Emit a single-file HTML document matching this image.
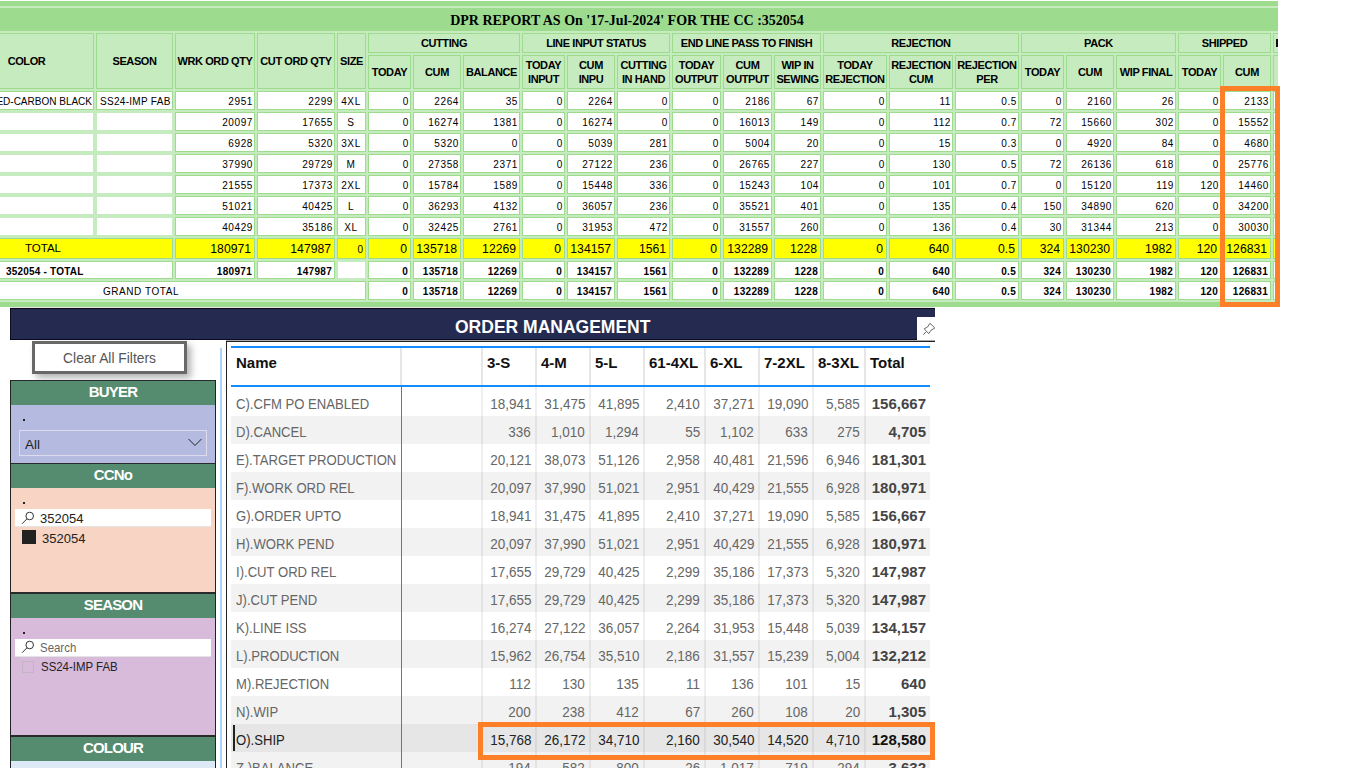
<!DOCTYPE html>
<html><head><meta charset="utf-8"><title>DPR</title><style>
html,body{margin:0;padding:0;background:#fff;}
body{width:1366px;height:768px;overflow:hidden;position:relative;font-family:"Liberation Sans",sans-serif;}
#dpr{position:absolute;left:0;top:0;width:1278px;height:307px;overflow:hidden;background:#c6ebbe;}
.band{position:absolute;left:0;width:1278px;height:5px;background:#9ddc8f;}
#dpr .c{position:absolute;box-sizing:border-box;border:1px solid #9ddc8f;overflow:hidden;}
.title{position:absolute;left:0;top:9px;width:1254px;height:23px;line-height:23px;text-align:center;
  font-family:"Liberation Serif",serif;font-weight:bold;font-size:14px;color:#000;}
.h{display:flex;align-items:center;justify-content:center;text-align:center;font-weight:bold;font-size:11px;letter-spacing:-0.4px;line-height:14px;color:#000;}
.d,.b,.y,.g{font-size:10px;color:#000;line-height:17px;}
.d .rt,.d .ct{letter-spacing:0.6px;right:1px}
.d .lt{letter-spacing:0.3px;}
.b .rt{letter-spacing:0.3px;right:2px}
.b{font-weight:bold;}
.y{font-size:12.2px;line-height:19px;}
.y .rt{right:3px}
.rt{position:absolute;right:2px;top:1px;white-space:nowrap;}
.lt{position:absolute;left:3px;top:1px;white-space:nowrap;}
.ct{position:absolute;left:0;right:0;text-align:center;top:1px;white-space:nowrap;}
.ob{position:absolute;box-sizing:border-box;border:5px solid #fd7f27;}
#navy{position:absolute;left:10px;top:308px;width:925px;height:32px;background:#252b50;box-sizing:border-box;border-top:1px solid #0b0b1c;border-bottom:1px solid #0b0b1c;border-left:1px solid #0b0b1c;}
.otitle{position:absolute;left:444px;top:8px;font-weight:bold;font-size:17.5px;color:#fff;line-height:20px;}
#pin{position:absolute;left:917px;top:317px;width:18px;height:23px;background:#fff;overflow:hidden;}
#clear{position:absolute;left:32px;top:341px;width:155px;height:33px;box-sizing:border-box;border:3px solid #686868;background:#fff;
  text-align:center;line-height:30px;font-size:13.8px;color:#555;box-shadow:4px 4px 7px rgba(0,0,0,0.3);}
.slh{position:absolute;left:11px;width:204px;background:#558b6e;color:#fff;font-weight:bold;font-size:15px;letter-spacing:-0.8px;text-align:center;text-indent:0;}
.dot{position:absolute;width:2px;height:2px;background:#222;}
.sbox{position:absolute;left:15px;width:196px;height:18px;background:#fff;border-bottom:1px solid #e4e4e4;box-sizing:border-box;}
.mag{position:absolute;}
.st{position:absolute;font-size:13px;line-height:16px;white-space:nowrap;}
.th{position:absolute;font-weight:bold;font-size:15px;color:#111;line-height:18px;white-space:nowrap;}
.td{position:absolute;font-size:15.5px;line-height:16px;white-space:nowrap;}
.nm{transform:scaleX(0.845);transform-origin:0 0;}
.tn{transform:scaleX(0.87);transform-origin:100% 0;}
.tb{font-weight:bold;font-size:15px;}
</style></head>
<body>
<div id="dpr">
<div style="position:absolute;left:0;top:0;width:1278px;height:1px;background:#fff"></div>
<div class="band" style="top:1px"></div>
<div class="band" style="top:302px"></div>
<div style="position:absolute;left:0;top:8px;width:1278px;height:23px;background:#9ddc8f"></div>
<div class="title">DPR REPORT AS On '17-Jul-2024' FOR THE CC :352054</div>
<div class="c h" style="left:-41px;top:33px;width:135px;height:56px;background:#c6ebbe;border-color:#9ddc8f;"><span>COLOR</span></div>
<div class="c h" style="left:96px;top:33px;width:77px;height:56px;background:#c6ebbe;border-color:#9ddc8f;"><span>SEASON</span></div>
<div class="c h" style="left:175px;top:33px;width:80px;height:56px;background:#c6ebbe;border-color:#9ddc8f;"><span>WRK ORD QTY</span></div>
<div class="c h" style="left:257px;top:33px;width:78px;height:56px;background:#c6ebbe;border-color:#9ddc8f;"><span>CUT ORD QTY</span></div>
<div class="c h" style="left:337px;top:33px;width:29px;height:56px;background:#c6ebbe;border-color:#9ddc8f;"><span>SIZE</span></div>
<div class="c h" style="left:368px;top:33px;width:152px;height:20px;background:#c6ebbe;border-color:#9ddc8f;"><span>CUTTING</span></div>
<div class="c h" style="left:522px;top:33px;width:148px;height:20px;background:#c6ebbe;border-color:#9ddc8f;"><span>LINE INPUT STATUS</span></div>
<div class="c h" style="left:672px;top:33px;width:149px;height:20px;background:#c6ebbe;border-color:#9ddc8f;"><span>END LINE PASS TO FINISH</span></div>
<div class="c h" style="left:823px;top:33px;width:196px;height:20px;background:#c6ebbe;border-color:#9ddc8f;"><span>REJECTION</span></div>
<div class="c h" style="left:1021px;top:33px;width:155px;height:20px;background:#c6ebbe;border-color:#9ddc8f;"><span>PACK</span></div>
<div class="c h" style="left:1178px;top:33px;width:93px;height:20px;background:#c6ebbe;border-color:#9ddc8f;"><span>SHIPPED</span></div>
<div class="c h" style="left:1273px;top:33px;width:58px;height:20px;background:#c6ebbe;border-color:#9ddc8f;"></div>
<div class="c h" style="left:368px;top:55px;width:43px;height:34px;background:#c6ebbe;border-color:#9ddc8f;"><span>TODAY</span></div>
<div class="c h" style="left:413px;top:55px;width:48px;height:34px;background:#c6ebbe;border-color:#9ddc8f;"><span>CUM</span></div>
<div class="c h" style="left:463px;top:55px;width:57px;height:34px;background:#c6ebbe;border-color:#9ddc8f;"><span>BALANCE</span></div>
<div class="c h" style="left:522px;top:55px;width:43px;height:34px;background:#c6ebbe;border-color:#9ddc8f;"><span>TODAY<br>INPUT</span></div>
<div class="c h" style="left:567px;top:55px;width:48px;height:34px;background:#c6ebbe;border-color:#9ddc8f;"><span>CUM<br>INPU</span></div>
<div class="c h" style="left:617px;top:55px;width:53px;height:34px;background:#c6ebbe;border-color:#9ddc8f;"><span>CUTTING<br>IN HAND</span></div>
<div class="c h" style="left:672px;top:55px;width:49px;height:34px;background:#c6ebbe;border-color:#9ddc8f;"><span>TODAY<br>OUTPUT</span></div>
<div class="c h" style="left:723px;top:55px;width:49px;height:34px;background:#c6ebbe;border-color:#9ddc8f;"><span>CUM<br>OUTPUT</span></div>
<div class="c h" style="left:774px;top:55px;width:47px;height:34px;background:#c6ebbe;border-color:#9ddc8f;"><span>WIP IN<br>SEWING</span></div>
<div class="c h" style="left:823px;top:55px;width:64px;height:34px;background:#c6ebbe;border-color:#9ddc8f;"><span>TODAY<br>REJECTION</span></div>
<div class="c h" style="left:889px;top:55px;width:64px;height:34px;background:#c6ebbe;border-color:#9ddc8f;"><span>REJECTION<br>CUM</span></div>
<div class="c h" style="left:955px;top:55px;width:64px;height:34px;background:#c6ebbe;border-color:#9ddc8f;"><span>REJECTION<br>PER</span></div>
<div class="c h" style="left:1021px;top:55px;width:43px;height:34px;background:#c6ebbe;border-color:#9ddc8f;"><span>TODAY</span></div>
<div class="c h" style="left:1066px;top:55px;width:48px;height:34px;background:#c6ebbe;border-color:#9ddc8f;"><span>CUM</span></div>
<div class="c h" style="left:1116px;top:55px;width:60px;height:34px;background:#c6ebbe;border-color:#9ddc8f;"><span>WIP FINAL</span></div>
<div class="c h" style="left:1178px;top:55px;width:43px;height:34px;background:#c6ebbe;border-color:#9ddc8f;"><span>TODAY</span></div>
<div class="c h" style="left:1223px;top:55px;width:48px;height:34px;background:#c6ebbe;border-color:#9ddc8f;"><span>CUM</span></div>
<div class="c h" style="left:1273px;top:55px;width:58px;height:34px;background:#c6ebbe;border-color:#9ddc8f;"><span></span></div>
<div class="c d" style="left:-41px;top:91px;width:135px;height:19px;background:#fff;border-color:#9ddc8f;"><span class="rt" style="letter-spacing:0">ED-CARBON BLACK</span></div>
<div class="c d" style="left:96px;top:91px;width:77px;height:19px;background:#fff;border-color:#9ddc8f;"><span class="lt">SS24-IMP FAB</span></div>
<div class="c d" style="left:175px;top:91px;width:80px;height:19px;background:#fff;border-color:#9ddc8f;"><span class="rt">2951</span></div>
<div class="c d" style="left:257px;top:91px;width:78px;height:19px;background:#fff;border-color:#9ddc8f;"><span class="rt">2299</span></div>
<div class="c d" style="left:337px;top:91px;width:29px;height:19px;background:#fff;border-color:#9ddc8f;"><span class="ct">4XL</span></div>
<div class="c d" style="left:368px;top:91px;width:43px;height:19px;background:#fff;border-color:#9ddc8f;"><span class="rt">0</span></div>
<div class="c d" style="left:413px;top:91px;width:48px;height:19px;background:#fff;border-color:#9ddc8f;"><span class="rt">2264</span></div>
<div class="c d" style="left:463px;top:91px;width:57px;height:19px;background:#fff;border-color:#9ddc8f;"><span class="rt">35</span></div>
<div class="c d" style="left:522px;top:91px;width:43px;height:19px;background:#fff;border-color:#9ddc8f;"><span class="rt">0</span></div>
<div class="c d" style="left:567px;top:91px;width:48px;height:19px;background:#fff;border-color:#9ddc8f;"><span class="rt">2264</span></div>
<div class="c d" style="left:617px;top:91px;width:53px;height:19px;background:#fff;border-color:#9ddc8f;"><span class="rt">0</span></div>
<div class="c d" style="left:672px;top:91px;width:49px;height:19px;background:#fff;border-color:#9ddc8f;"><span class="rt">0</span></div>
<div class="c d" style="left:723px;top:91px;width:49px;height:19px;background:#fff;border-color:#9ddc8f;"><span class="rt">2186</span></div>
<div class="c d" style="left:774px;top:91px;width:47px;height:19px;background:#fff;border-color:#9ddc8f;"><span class="rt">67</span></div>
<div class="c d" style="left:823px;top:91px;width:64px;height:19px;background:#fff;border-color:#9ddc8f;"><span class="rt">0</span></div>
<div class="c d" style="left:889px;top:91px;width:64px;height:19px;background:#fff;border-color:#9ddc8f;"><span class="rt">11</span></div>
<div class="c d" style="left:955px;top:91px;width:64px;height:19px;background:#fff;border-color:#9ddc8f;"><span class="rt">0.5</span></div>
<div class="c d" style="left:1021px;top:91px;width:43px;height:19px;background:#fff;border-color:#9ddc8f;"><span class="rt">0</span></div>
<div class="c d" style="left:1066px;top:91px;width:48px;height:19px;background:#fff;border-color:#9ddc8f;"><span class="rt">2160</span></div>
<div class="c d" style="left:1116px;top:91px;width:60px;height:19px;background:#fff;border-color:#9ddc8f;"><span class="rt">26</span></div>
<div class="c d" style="left:1178px;top:91px;width:43px;height:19px;background:#fff;border-color:#9ddc8f;"><span class="rt">0</span></div>
<div class="c d" style="left:1223px;top:91px;width:48px;height:19px;background:#fff;border-color:#9ddc8f;"><span class="rt">2133</span></div>
<div class="c d" style="left:1273px;top:91px;width:58px;height:19px;background:#fff;border-color:#9ddc8f;"></div>
<div class="c d" style="left:-41px;top:112px;width:135px;height:19px;background:#fff;border-color:#c6ebbe;"></div>
<div class="c d" style="left:96px;top:112px;width:77px;height:19px;background:#fff;border-color:#c6ebbe;"></div>
<div class="c d" style="left:175px;top:112px;width:80px;height:19px;background:#fff;border-color:#9ddc8f;"><span class="rt">20097</span></div>
<div class="c d" style="left:257px;top:112px;width:78px;height:19px;background:#fff;border-color:#9ddc8f;"><span class="rt">17655</span></div>
<div class="c d" style="left:337px;top:112px;width:29px;height:19px;background:#fff;border-color:#9ddc8f;"><span class="ct">S</span></div>
<div class="c d" style="left:368px;top:112px;width:43px;height:19px;background:#fff;border-color:#9ddc8f;"><span class="rt">0</span></div>
<div class="c d" style="left:413px;top:112px;width:48px;height:19px;background:#fff;border-color:#9ddc8f;"><span class="rt">16274</span></div>
<div class="c d" style="left:463px;top:112px;width:57px;height:19px;background:#fff;border-color:#9ddc8f;"><span class="rt">1381</span></div>
<div class="c d" style="left:522px;top:112px;width:43px;height:19px;background:#fff;border-color:#9ddc8f;"><span class="rt">0</span></div>
<div class="c d" style="left:567px;top:112px;width:48px;height:19px;background:#fff;border-color:#9ddc8f;"><span class="rt">16274</span></div>
<div class="c d" style="left:617px;top:112px;width:53px;height:19px;background:#fff;border-color:#9ddc8f;"><span class="rt">0</span></div>
<div class="c d" style="left:672px;top:112px;width:49px;height:19px;background:#fff;border-color:#9ddc8f;"><span class="rt">0</span></div>
<div class="c d" style="left:723px;top:112px;width:49px;height:19px;background:#fff;border-color:#9ddc8f;"><span class="rt">16013</span></div>
<div class="c d" style="left:774px;top:112px;width:47px;height:19px;background:#fff;border-color:#9ddc8f;"><span class="rt">149</span></div>
<div class="c d" style="left:823px;top:112px;width:64px;height:19px;background:#fff;border-color:#9ddc8f;"><span class="rt">0</span></div>
<div class="c d" style="left:889px;top:112px;width:64px;height:19px;background:#fff;border-color:#9ddc8f;"><span class="rt">112</span></div>
<div class="c d" style="left:955px;top:112px;width:64px;height:19px;background:#fff;border-color:#9ddc8f;"><span class="rt">0.7</span></div>
<div class="c d" style="left:1021px;top:112px;width:43px;height:19px;background:#fff;border-color:#9ddc8f;"><span class="rt">72</span></div>
<div class="c d" style="left:1066px;top:112px;width:48px;height:19px;background:#fff;border-color:#9ddc8f;"><span class="rt">15660</span></div>
<div class="c d" style="left:1116px;top:112px;width:60px;height:19px;background:#fff;border-color:#9ddc8f;"><span class="rt">302</span></div>
<div class="c d" style="left:1178px;top:112px;width:43px;height:19px;background:#fff;border-color:#9ddc8f;"><span class="rt">0</span></div>
<div class="c d" style="left:1223px;top:112px;width:48px;height:19px;background:#fff;border-color:#9ddc8f;"><span class="rt">15552</span></div>
<div class="c d" style="left:1273px;top:112px;width:58px;height:19px;background:#fff;border-color:#9ddc8f;"></div>
<div class="c d" style="left:-41px;top:133px;width:135px;height:19px;background:#fff;border-color:#c6ebbe;"></div>
<div class="c d" style="left:96px;top:133px;width:77px;height:19px;background:#fff;border-color:#c6ebbe;"></div>
<div class="c d" style="left:175px;top:133px;width:80px;height:19px;background:#fff;border-color:#9ddc8f;"><span class="rt">6928</span></div>
<div class="c d" style="left:257px;top:133px;width:78px;height:19px;background:#fff;border-color:#9ddc8f;"><span class="rt">5320</span></div>
<div class="c d" style="left:337px;top:133px;width:29px;height:19px;background:#fff;border-color:#9ddc8f;"><span class="ct">3XL</span></div>
<div class="c d" style="left:368px;top:133px;width:43px;height:19px;background:#fff;border-color:#9ddc8f;"><span class="rt">0</span></div>
<div class="c d" style="left:413px;top:133px;width:48px;height:19px;background:#fff;border-color:#9ddc8f;"><span class="rt">5320</span></div>
<div class="c d" style="left:463px;top:133px;width:57px;height:19px;background:#fff;border-color:#9ddc8f;"><span class="rt">0</span></div>
<div class="c d" style="left:522px;top:133px;width:43px;height:19px;background:#fff;border-color:#9ddc8f;"><span class="rt">0</span></div>
<div class="c d" style="left:567px;top:133px;width:48px;height:19px;background:#fff;border-color:#9ddc8f;"><span class="rt">5039</span></div>
<div class="c d" style="left:617px;top:133px;width:53px;height:19px;background:#fff;border-color:#9ddc8f;"><span class="rt">281</span></div>
<div class="c d" style="left:672px;top:133px;width:49px;height:19px;background:#fff;border-color:#9ddc8f;"><span class="rt">0</span></div>
<div class="c d" style="left:723px;top:133px;width:49px;height:19px;background:#fff;border-color:#9ddc8f;"><span class="rt">5004</span></div>
<div class="c d" style="left:774px;top:133px;width:47px;height:19px;background:#fff;border-color:#9ddc8f;"><span class="rt">20</span></div>
<div class="c d" style="left:823px;top:133px;width:64px;height:19px;background:#fff;border-color:#9ddc8f;"><span class="rt">0</span></div>
<div class="c d" style="left:889px;top:133px;width:64px;height:19px;background:#fff;border-color:#9ddc8f;"><span class="rt">15</span></div>
<div class="c d" style="left:955px;top:133px;width:64px;height:19px;background:#fff;border-color:#9ddc8f;"><span class="rt">0.3</span></div>
<div class="c d" style="left:1021px;top:133px;width:43px;height:19px;background:#fff;border-color:#9ddc8f;"><span class="rt">0</span></div>
<div class="c d" style="left:1066px;top:133px;width:48px;height:19px;background:#fff;border-color:#9ddc8f;"><span class="rt">4920</span></div>
<div class="c d" style="left:1116px;top:133px;width:60px;height:19px;background:#fff;border-color:#9ddc8f;"><span class="rt">84</span></div>
<div class="c d" style="left:1178px;top:133px;width:43px;height:19px;background:#fff;border-color:#9ddc8f;"><span class="rt">0</span></div>
<div class="c d" style="left:1223px;top:133px;width:48px;height:19px;background:#fff;border-color:#9ddc8f;"><span class="rt">4680</span></div>
<div class="c d" style="left:1273px;top:133px;width:58px;height:19px;background:#fff;border-color:#9ddc8f;"></div>
<div class="c d" style="left:-41px;top:154px;width:135px;height:19px;background:#fff;border-color:#c6ebbe;"></div>
<div class="c d" style="left:96px;top:154px;width:77px;height:19px;background:#fff;border-color:#c6ebbe;"></div>
<div class="c d" style="left:175px;top:154px;width:80px;height:19px;background:#fff;border-color:#9ddc8f;"><span class="rt">37990</span></div>
<div class="c d" style="left:257px;top:154px;width:78px;height:19px;background:#fff;border-color:#9ddc8f;"><span class="rt">29729</span></div>
<div class="c d" style="left:337px;top:154px;width:29px;height:19px;background:#fff;border-color:#9ddc8f;"><span class="ct">M</span></div>
<div class="c d" style="left:368px;top:154px;width:43px;height:19px;background:#fff;border-color:#9ddc8f;"><span class="rt">0</span></div>
<div class="c d" style="left:413px;top:154px;width:48px;height:19px;background:#fff;border-color:#9ddc8f;"><span class="rt">27358</span></div>
<div class="c d" style="left:463px;top:154px;width:57px;height:19px;background:#fff;border-color:#9ddc8f;"><span class="rt">2371</span></div>
<div class="c d" style="left:522px;top:154px;width:43px;height:19px;background:#fff;border-color:#9ddc8f;"><span class="rt">0</span></div>
<div class="c d" style="left:567px;top:154px;width:48px;height:19px;background:#fff;border-color:#9ddc8f;"><span class="rt">27122</span></div>
<div class="c d" style="left:617px;top:154px;width:53px;height:19px;background:#fff;border-color:#9ddc8f;"><span class="rt">236</span></div>
<div class="c d" style="left:672px;top:154px;width:49px;height:19px;background:#fff;border-color:#9ddc8f;"><span class="rt">0</span></div>
<div class="c d" style="left:723px;top:154px;width:49px;height:19px;background:#fff;border-color:#9ddc8f;"><span class="rt">26765</span></div>
<div class="c d" style="left:774px;top:154px;width:47px;height:19px;background:#fff;border-color:#9ddc8f;"><span class="rt">227</span></div>
<div class="c d" style="left:823px;top:154px;width:64px;height:19px;background:#fff;border-color:#9ddc8f;"><span class="rt">0</span></div>
<div class="c d" style="left:889px;top:154px;width:64px;height:19px;background:#fff;border-color:#9ddc8f;"><span class="rt">130</span></div>
<div class="c d" style="left:955px;top:154px;width:64px;height:19px;background:#fff;border-color:#9ddc8f;"><span class="rt">0.5</span></div>
<div class="c d" style="left:1021px;top:154px;width:43px;height:19px;background:#fff;border-color:#9ddc8f;"><span class="rt">72</span></div>
<div class="c d" style="left:1066px;top:154px;width:48px;height:19px;background:#fff;border-color:#9ddc8f;"><span class="rt">26136</span></div>
<div class="c d" style="left:1116px;top:154px;width:60px;height:19px;background:#fff;border-color:#9ddc8f;"><span class="rt">618</span></div>
<div class="c d" style="left:1178px;top:154px;width:43px;height:19px;background:#fff;border-color:#9ddc8f;"><span class="rt">0</span></div>
<div class="c d" style="left:1223px;top:154px;width:48px;height:19px;background:#fff;border-color:#9ddc8f;"><span class="rt">25776</span></div>
<div class="c d" style="left:1273px;top:154px;width:58px;height:19px;background:#fff;border-color:#9ddc8f;"></div>
<div class="c d" style="left:-41px;top:175px;width:135px;height:19px;background:#fff;border-color:#c6ebbe;"></div>
<div class="c d" style="left:96px;top:175px;width:77px;height:19px;background:#fff;border-color:#c6ebbe;"></div>
<div class="c d" style="left:175px;top:175px;width:80px;height:19px;background:#fff;border-color:#9ddc8f;"><span class="rt">21555</span></div>
<div class="c d" style="left:257px;top:175px;width:78px;height:19px;background:#fff;border-color:#9ddc8f;"><span class="rt">17373</span></div>
<div class="c d" style="left:337px;top:175px;width:29px;height:19px;background:#fff;border-color:#9ddc8f;"><span class="ct">2XL</span></div>
<div class="c d" style="left:368px;top:175px;width:43px;height:19px;background:#fff;border-color:#9ddc8f;"><span class="rt">0</span></div>
<div class="c d" style="left:413px;top:175px;width:48px;height:19px;background:#fff;border-color:#9ddc8f;"><span class="rt">15784</span></div>
<div class="c d" style="left:463px;top:175px;width:57px;height:19px;background:#fff;border-color:#9ddc8f;"><span class="rt">1589</span></div>
<div class="c d" style="left:522px;top:175px;width:43px;height:19px;background:#fff;border-color:#9ddc8f;"><span class="rt">0</span></div>
<div class="c d" style="left:567px;top:175px;width:48px;height:19px;background:#fff;border-color:#9ddc8f;"><span class="rt">15448</span></div>
<div class="c d" style="left:617px;top:175px;width:53px;height:19px;background:#fff;border-color:#9ddc8f;"><span class="rt">336</span></div>
<div class="c d" style="left:672px;top:175px;width:49px;height:19px;background:#fff;border-color:#9ddc8f;"><span class="rt">0</span></div>
<div class="c d" style="left:723px;top:175px;width:49px;height:19px;background:#fff;border-color:#9ddc8f;"><span class="rt">15243</span></div>
<div class="c d" style="left:774px;top:175px;width:47px;height:19px;background:#fff;border-color:#9ddc8f;"><span class="rt">104</span></div>
<div class="c d" style="left:823px;top:175px;width:64px;height:19px;background:#fff;border-color:#9ddc8f;"><span class="rt">0</span></div>
<div class="c d" style="left:889px;top:175px;width:64px;height:19px;background:#fff;border-color:#9ddc8f;"><span class="rt">101</span></div>
<div class="c d" style="left:955px;top:175px;width:64px;height:19px;background:#fff;border-color:#9ddc8f;"><span class="rt">0.7</span></div>
<div class="c d" style="left:1021px;top:175px;width:43px;height:19px;background:#fff;border-color:#9ddc8f;"><span class="rt">0</span></div>
<div class="c d" style="left:1066px;top:175px;width:48px;height:19px;background:#fff;border-color:#9ddc8f;"><span class="rt">15120</span></div>
<div class="c d" style="left:1116px;top:175px;width:60px;height:19px;background:#fff;border-color:#9ddc8f;"><span class="rt">119</span></div>
<div class="c d" style="left:1178px;top:175px;width:43px;height:19px;background:#fff;border-color:#9ddc8f;"><span class="rt">120</span></div>
<div class="c d" style="left:1223px;top:175px;width:48px;height:19px;background:#fff;border-color:#9ddc8f;"><span class="rt">14460</span></div>
<div class="c d" style="left:1273px;top:175px;width:58px;height:19px;background:#fff;border-color:#9ddc8f;"></div>
<div class="c d" style="left:-41px;top:196px;width:135px;height:19px;background:#fff;border-color:#c6ebbe;"></div>
<div class="c d" style="left:96px;top:196px;width:77px;height:19px;background:#fff;border-color:#c6ebbe;"></div>
<div class="c d" style="left:175px;top:196px;width:80px;height:19px;background:#fff;border-color:#9ddc8f;"><span class="rt">51021</span></div>
<div class="c d" style="left:257px;top:196px;width:78px;height:19px;background:#fff;border-color:#9ddc8f;"><span class="rt">40425</span></div>
<div class="c d" style="left:337px;top:196px;width:29px;height:19px;background:#fff;border-color:#9ddc8f;"><span class="ct">L</span></div>
<div class="c d" style="left:368px;top:196px;width:43px;height:19px;background:#fff;border-color:#9ddc8f;"><span class="rt">0</span></div>
<div class="c d" style="left:413px;top:196px;width:48px;height:19px;background:#fff;border-color:#9ddc8f;"><span class="rt">36293</span></div>
<div class="c d" style="left:463px;top:196px;width:57px;height:19px;background:#fff;border-color:#9ddc8f;"><span class="rt">4132</span></div>
<div class="c d" style="left:522px;top:196px;width:43px;height:19px;background:#fff;border-color:#9ddc8f;"><span class="rt">0</span></div>
<div class="c d" style="left:567px;top:196px;width:48px;height:19px;background:#fff;border-color:#9ddc8f;"><span class="rt">36057</span></div>
<div class="c d" style="left:617px;top:196px;width:53px;height:19px;background:#fff;border-color:#9ddc8f;"><span class="rt">236</span></div>
<div class="c d" style="left:672px;top:196px;width:49px;height:19px;background:#fff;border-color:#9ddc8f;"><span class="rt">0</span></div>
<div class="c d" style="left:723px;top:196px;width:49px;height:19px;background:#fff;border-color:#9ddc8f;"><span class="rt">35521</span></div>
<div class="c d" style="left:774px;top:196px;width:47px;height:19px;background:#fff;border-color:#9ddc8f;"><span class="rt">401</span></div>
<div class="c d" style="left:823px;top:196px;width:64px;height:19px;background:#fff;border-color:#9ddc8f;"><span class="rt">0</span></div>
<div class="c d" style="left:889px;top:196px;width:64px;height:19px;background:#fff;border-color:#9ddc8f;"><span class="rt">135</span></div>
<div class="c d" style="left:955px;top:196px;width:64px;height:19px;background:#fff;border-color:#9ddc8f;"><span class="rt">0.4</span></div>
<div class="c d" style="left:1021px;top:196px;width:43px;height:19px;background:#fff;border-color:#9ddc8f;"><span class="rt">150</span></div>
<div class="c d" style="left:1066px;top:196px;width:48px;height:19px;background:#fff;border-color:#9ddc8f;"><span class="rt">34890</span></div>
<div class="c d" style="left:1116px;top:196px;width:60px;height:19px;background:#fff;border-color:#9ddc8f;"><span class="rt">620</span></div>
<div class="c d" style="left:1178px;top:196px;width:43px;height:19px;background:#fff;border-color:#9ddc8f;"><span class="rt">0</span></div>
<div class="c d" style="left:1223px;top:196px;width:48px;height:19px;background:#fff;border-color:#9ddc8f;"><span class="rt">34200</span></div>
<div class="c d" style="left:1273px;top:196px;width:58px;height:19px;background:#fff;border-color:#9ddc8f;"></div>
<div class="c d" style="left:-41px;top:217px;width:135px;height:19px;background:#fff;border-color:#c6ebbe;"></div>
<div class="c d" style="left:96px;top:217px;width:77px;height:19px;background:#fff;border-color:#c6ebbe;"></div>
<div class="c d" style="left:175px;top:217px;width:80px;height:19px;background:#fff;border-color:#9ddc8f;"><span class="rt">40429</span></div>
<div class="c d" style="left:257px;top:217px;width:78px;height:19px;background:#fff;border-color:#9ddc8f;"><span class="rt">35186</span></div>
<div class="c d" style="left:337px;top:217px;width:29px;height:19px;background:#fff;border-color:#9ddc8f;"><span class="ct">XL</span></div>
<div class="c d" style="left:368px;top:217px;width:43px;height:19px;background:#fff;border-color:#9ddc8f;"><span class="rt">0</span></div>
<div class="c d" style="left:413px;top:217px;width:48px;height:19px;background:#fff;border-color:#9ddc8f;"><span class="rt">32425</span></div>
<div class="c d" style="left:463px;top:217px;width:57px;height:19px;background:#fff;border-color:#9ddc8f;"><span class="rt">2761</span></div>
<div class="c d" style="left:522px;top:217px;width:43px;height:19px;background:#fff;border-color:#9ddc8f;"><span class="rt">0</span></div>
<div class="c d" style="left:567px;top:217px;width:48px;height:19px;background:#fff;border-color:#9ddc8f;"><span class="rt">31953</span></div>
<div class="c d" style="left:617px;top:217px;width:53px;height:19px;background:#fff;border-color:#9ddc8f;"><span class="rt">472</span></div>
<div class="c d" style="left:672px;top:217px;width:49px;height:19px;background:#fff;border-color:#9ddc8f;"><span class="rt">0</span></div>
<div class="c d" style="left:723px;top:217px;width:49px;height:19px;background:#fff;border-color:#9ddc8f;"><span class="rt">31557</span></div>
<div class="c d" style="left:774px;top:217px;width:47px;height:19px;background:#fff;border-color:#9ddc8f;"><span class="rt">260</span></div>
<div class="c d" style="left:823px;top:217px;width:64px;height:19px;background:#fff;border-color:#9ddc8f;"><span class="rt">0</span></div>
<div class="c d" style="left:889px;top:217px;width:64px;height:19px;background:#fff;border-color:#9ddc8f;"><span class="rt">136</span></div>
<div class="c d" style="left:955px;top:217px;width:64px;height:19px;background:#fff;border-color:#9ddc8f;"><span class="rt">0.4</span></div>
<div class="c d" style="left:1021px;top:217px;width:43px;height:19px;background:#fff;border-color:#9ddc8f;"><span class="rt">30</span></div>
<div class="c d" style="left:1066px;top:217px;width:48px;height:19px;background:#fff;border-color:#9ddc8f;"><span class="rt">31344</span></div>
<div class="c d" style="left:1116px;top:217px;width:60px;height:19px;background:#fff;border-color:#9ddc8f;"><span class="rt">213</span></div>
<div class="c d" style="left:1178px;top:217px;width:43px;height:19px;background:#fff;border-color:#9ddc8f;"><span class="rt">0</span></div>
<div class="c d" style="left:1223px;top:217px;width:48px;height:19px;background:#fff;border-color:#9ddc8f;"><span class="rt">30030</span></div>
<div class="c d" style="left:1273px;top:217px;width:58px;height:19px;background:#fff;border-color:#9ddc8f;"></div>
<div class="c y" style="left:-41px;top:238px;width:214px;height:21px;background:#ffff00;border-color:#9ddc8f;"><span class="yt" style="position:absolute;left:65px;font-size:11.5px">TOTAL</span></div>
<div class="c y" style="left:175px;top:238px;width:80px;height:21px;background:#ffff00;border-color:#9ddc8f;"><span class="rt">180971</span></div>
<div class="c y" style="left:257px;top:238px;width:78px;height:21px;background:#ffff00;border-color:#9ddc8f;"><span class="rt">147987</span></div>
<div class="c y" style="left:337px;top:238px;width:29px;height:21px;background:#ffff00;border-color:#9ddc8f;"><span class="rt" style="font-size:10px;right:2px">0</span></div>
<div class="c y" style="left:368px;top:238px;width:43px;height:21px;background:#ffff00;border-color:#9ddc8f;"><span class="rt">0</span></div>
<div class="c y" style="left:413px;top:238px;width:48px;height:21px;background:#ffff00;border-color:#9ddc8f;"><span class="rt">135718</span></div>
<div class="c y" style="left:463px;top:238px;width:57px;height:21px;background:#ffff00;border-color:#9ddc8f;"><span class="rt">12269</span></div>
<div class="c y" style="left:522px;top:238px;width:43px;height:21px;background:#ffff00;border-color:#9ddc8f;"><span class="rt">0</span></div>
<div class="c y" style="left:567px;top:238px;width:48px;height:21px;background:#ffff00;border-color:#9ddc8f;"><span class="rt">134157</span></div>
<div class="c y" style="left:617px;top:238px;width:53px;height:21px;background:#ffff00;border-color:#9ddc8f;"><span class="rt">1561</span></div>
<div class="c y" style="left:672px;top:238px;width:49px;height:21px;background:#ffff00;border-color:#9ddc8f;"><span class="rt">0</span></div>
<div class="c y" style="left:723px;top:238px;width:49px;height:21px;background:#ffff00;border-color:#9ddc8f;"><span class="rt">132289</span></div>
<div class="c y" style="left:774px;top:238px;width:47px;height:21px;background:#ffff00;border-color:#9ddc8f;"><span class="rt">1228</span></div>
<div class="c y" style="left:823px;top:238px;width:64px;height:21px;background:#ffff00;border-color:#9ddc8f;"><span class="rt">0</span></div>
<div class="c y" style="left:889px;top:238px;width:64px;height:21px;background:#ffff00;border-color:#9ddc8f;"><span class="rt">640</span></div>
<div class="c y" style="left:955px;top:238px;width:64px;height:21px;background:#ffff00;border-color:#9ddc8f;"><span class="rt">0.5</span></div>
<div class="c y" style="left:1021px;top:238px;width:43px;height:21px;background:#ffff00;border-color:#9ddc8f;"><span class="rt">324</span></div>
<div class="c y" style="left:1066px;top:238px;width:48px;height:21px;background:#ffff00;border-color:#9ddc8f;"><span class="rt">130230</span></div>
<div class="c y" style="left:1116px;top:238px;width:60px;height:21px;background:#ffff00;border-color:#9ddc8f;"><span class="rt">1982</span></div>
<div class="c y" style="left:1178px;top:238px;width:43px;height:21px;background:#ffff00;border-color:#9ddc8f;"><span class="rt">120</span></div>
<div class="c y" style="left:1223px;top:238px;width:48px;height:21px;background:#ffff00;border-color:#9ddc8f;"><span class="rt">126831</span></div>
<div class="c y" style="left:1273px;top:238px;width:58px;height:21px;background:#ffff00;border-color:#9ddc8f;"></div>
<div class="c b" style="left:-41px;top:261px;width:214px;height:18px;background:#fff;border-color:#9ddc8f;"><span class="lt" style="position:absolute;left:46px;letter-spacing:0.2px">352054 - TOTAL</span></div>
<div class="c b" style="left:175px;top:261px;width:80px;height:18px;background:#fff;border-color:#9ddc8f;"><span class="rt">180971</span></div>
<div class="c b" style="left:257px;top:261px;width:78px;height:18px;background:#fff;border-color:#9ddc8f;"><span class="rt">147987</span></div>
<div class="c b" style="left:337px;top:261px;width:29px;height:18px;background:#fff;border-color:#c6ebbe;"></div>
<div class="c b" style="left:368px;top:261px;width:43px;height:18px;background:#fff;border-color:#9ddc8f;"><span class="rt">0</span></div>
<div class="c b" style="left:413px;top:261px;width:48px;height:18px;background:#fff;border-color:#9ddc8f;"><span class="rt">135718</span></div>
<div class="c b" style="left:463px;top:261px;width:57px;height:18px;background:#fff;border-color:#9ddc8f;"><span class="rt">12269</span></div>
<div class="c b" style="left:522px;top:261px;width:43px;height:18px;background:#fff;border-color:#9ddc8f;"><span class="rt">0</span></div>
<div class="c b" style="left:567px;top:261px;width:48px;height:18px;background:#fff;border-color:#9ddc8f;"><span class="rt">134157</span></div>
<div class="c b" style="left:617px;top:261px;width:53px;height:18px;background:#fff;border-color:#9ddc8f;"><span class="rt">1561</span></div>
<div class="c b" style="left:672px;top:261px;width:49px;height:18px;background:#fff;border-color:#9ddc8f;"><span class="rt">0</span></div>
<div class="c b" style="left:723px;top:261px;width:49px;height:18px;background:#fff;border-color:#9ddc8f;"><span class="rt">132289</span></div>
<div class="c b" style="left:774px;top:261px;width:47px;height:18px;background:#fff;border-color:#9ddc8f;"><span class="rt">1228</span></div>
<div class="c b" style="left:823px;top:261px;width:64px;height:18px;background:#fff;border-color:#9ddc8f;"><span class="rt">0</span></div>
<div class="c b" style="left:889px;top:261px;width:64px;height:18px;background:#fff;border-color:#9ddc8f;"><span class="rt">640</span></div>
<div class="c b" style="left:955px;top:261px;width:64px;height:18px;background:#fff;border-color:#9ddc8f;"><span class="rt">0.5</span></div>
<div class="c b" style="left:1021px;top:261px;width:43px;height:18px;background:#fff;border-color:#9ddc8f;"><span class="rt">324</span></div>
<div class="c b" style="left:1066px;top:261px;width:48px;height:18px;background:#fff;border-color:#9ddc8f;"><span class="rt">130230</span></div>
<div class="c b" style="left:1116px;top:261px;width:60px;height:18px;background:#fff;border-color:#9ddc8f;"><span class="rt">1982</span></div>
<div class="c b" style="left:1178px;top:261px;width:43px;height:18px;background:#fff;border-color:#9ddc8f;"><span class="rt">120</span></div>
<div class="c b" style="left:1223px;top:261px;width:48px;height:18px;background:#fff;border-color:#9ddc8f;"><span class="rt">126831</span></div>
<div class="c b" style="left:1273px;top:261px;width:58px;height:18px;background:#fff;border-color:#9ddc8f;"></div>
<div class="c g" style="left:-41px;top:281px;width:407px;height:19px;background:#fff;border-color:#9ddc8f;"><span style="position:absolute;left:143px;top:1px;letter-spacing:0.55px">GRAND TOTAL</span></div>
<div class="c b" style="left:368px;top:281px;width:43px;height:19px;background:#fff;border-color:#9ddc8f;"><span class="rt">0</span></div>
<div class="c b" style="left:413px;top:281px;width:48px;height:19px;background:#fff;border-color:#9ddc8f;"><span class="rt">135718</span></div>
<div class="c b" style="left:463px;top:281px;width:57px;height:19px;background:#fff;border-color:#9ddc8f;"><span class="rt">12269</span></div>
<div class="c b" style="left:522px;top:281px;width:43px;height:19px;background:#fff;border-color:#9ddc8f;"><span class="rt">0</span></div>
<div class="c b" style="left:567px;top:281px;width:48px;height:19px;background:#fff;border-color:#9ddc8f;"><span class="rt">134157</span></div>
<div class="c b" style="left:617px;top:281px;width:53px;height:19px;background:#fff;border-color:#9ddc8f;"><span class="rt">1561</span></div>
<div class="c b" style="left:672px;top:281px;width:49px;height:19px;background:#fff;border-color:#9ddc8f;"><span class="rt">0</span></div>
<div class="c b" style="left:723px;top:281px;width:49px;height:19px;background:#fff;border-color:#9ddc8f;"><span class="rt">132289</span></div>
<div class="c b" style="left:774px;top:281px;width:47px;height:19px;background:#fff;border-color:#9ddc8f;"><span class="rt">1228</span></div>
<div class="c b" style="left:823px;top:281px;width:64px;height:19px;background:#fff;border-color:#9ddc8f;"><span class="rt">0</span></div>
<div class="c b" style="left:889px;top:281px;width:64px;height:19px;background:#fff;border-color:#9ddc8f;"><span class="rt">640</span></div>
<div class="c b" style="left:955px;top:281px;width:64px;height:19px;background:#fff;border-color:#9ddc8f;"><span class="rt">0.5</span></div>
<div class="c b" style="left:1021px;top:281px;width:43px;height:19px;background:#fff;border-color:#9ddc8f;"><span class="rt">324</span></div>
<div class="c b" style="left:1066px;top:281px;width:48px;height:19px;background:#fff;border-color:#9ddc8f;"><span class="rt">130230</span></div>
<div class="c b" style="left:1116px;top:281px;width:60px;height:19px;background:#fff;border-color:#9ddc8f;"><span class="rt">1982</span></div>
<div class="c b" style="left:1178px;top:281px;width:43px;height:19px;background:#fff;border-color:#9ddc8f;"><span class="rt">120</span></div>
<div class="c b" style="left:1223px;top:281px;width:48px;height:19px;background:#fff;border-color:#9ddc8f;"><span class="rt">126831</span></div>
<div class="c b" style="left:1273px;top:281px;width:58px;height:19px;background:#fff;border-color:#9ddc8f;"></div>
<div style="position:absolute;left:1276px;top:39px;width:2px;height:8px;background:#111"></div>
</div>
<div class="ob" style="left:1220px;top:86px;width:60px;height:221px"></div>
<div style="position:absolute;left:10px;top:307px;width:925px;height:1px;background:#e6e6e6"></div>
<div id="navy"><div class="otitle">ORDER MANAGEMENT</div></div>
<div id="pin"><svg width="18" height="23" viewBox="0 0 18 23"><path d="M13 6.3 L17.8 11 L13.9 13.4 L11.7 16.7 L7.2 11.8 L10.4 10.1 Z M9.1 14.8 L6.3 17.7" fill="none" stroke="#666" stroke-width="1" stroke-linejoin="round"/></svg></div>
<div id="clear">Clear All Filters</div>
<div style="position:absolute;left:10px;top:380px;width:206px;height:1px;background:#2a2a2a"></div>
<div class="slh" style="top:381px;height:24px;line-height:21px">BUYER</div>
<div style="position:absolute;left:11px;top:405px;width:204px;height:58px;background:#b4bae0"></div>
<div style="position:absolute;left:10px;top:380px;width:1px;height:83px;background:#222"></div>
<div style="position:absolute;left:215px;top:380px;width:1px;height:83px;background:#222"></div>
<div style="position:absolute;left:10px;top:463px;width:206px;height:1px;background:#2a2a2a"></div>
<div class="slh" style="top:464px;height:24px;line-height:21px">CCNo</div>
<div style="position:absolute;left:11px;top:488px;width:204px;height:104px;background:#f7d4c4"></div>
<div style="position:absolute;left:10px;top:463px;width:1px;height:129px;background:#222"></div>
<div style="position:absolute;left:215px;top:463px;width:1px;height:129px;background:#222"></div>
<div style="position:absolute;left:10px;top:592px;width:206px;height:2px;background:#2a2a2a"></div>
<div class="slh" style="top:594px;height:24px;line-height:21px">SEASON</div>
<div style="position:absolute;left:11px;top:618px;width:204px;height:117px;background:#d8bada"></div>
<div style="position:absolute;left:10px;top:592px;width:1px;height:143px;background:#222"></div>
<div style="position:absolute;left:215px;top:592px;width:1px;height:143px;background:#222"></div>
<div style="position:absolute;left:10px;top:735px;width:206px;height:2px;background:#2a2a2a"></div>
<div class="slh" style="top:737px;height:24px;line-height:21px">COLOUR</div>
<div style="position:absolute;left:11px;top:761px;width:204px;height:8px;background:#dde9f6"></div>
<div style="position:absolute;left:10px;top:735px;width:1px;height:34px;background:#222"></div>
<div style="position:absolute;left:215px;top:735px;width:1px;height:34px;background:#222"></div>
<div class="dot" style="left:23px;top:419px"></div>
<div style="position:absolute;left:19px;top:430px;width:188px;height:26px;box-sizing:border-box;border:1px solid #dcdcec"></div>
<div class="st" style="left:25px;top:437px;font-size:13.5px;color:#222">All</div>
<svg style="position:absolute;left:187px;top:437px" width="16" height="10" viewBox="0 0 16 10"><path d="M1.5 2 L8 8.5 L14.5 2" fill="none" stroke="#222" stroke-width="1"/></svg>
<div class="dot" style="left:23px;top:502px"></div>
<div class="sbox" style="top:509px"></div>
<svg class="mag" style="left:20px;top:511px" width="16" height="16" viewBox="0 0 16 16"><circle cx="9.7" cy="5" r="3.8" fill="none" stroke="#333" stroke-width="1"/><path d="M7 7.8 L2 12.8" stroke="#333" stroke-width="1"/></svg>
<div class="st" style="left:40px;top:511px;color:#222">352054</div>
<div style="position:absolute;left:22px;top:530px;width:14px;height:14px;background:#222"></div>
<div class="st" style="left:42px;top:531px;color:#222">352054</div>
<div class="dot" style="left:23px;top:632px"></div>
<div class="sbox" style="top:639px"></div>
<svg class="mag" style="left:20px;top:640px" width="16" height="16" viewBox="0 0 16 16"><circle cx="9.7" cy="5" r="3.8" fill="none" stroke="#333" stroke-width="1"/><path d="M7 7.8 L2 12.8" stroke="#333" stroke-width="1"/></svg>
<div class="st" style="left:40px;top:640px;color:#666;transform:scaleX(0.88);transform-origin:0 0">Search</div>
<div style="position:absolute;left:22px;top:661px;width:12px;height:12px;box-sizing:border-box;border:1px solid #c4b4c6"></div>
<div class="st" style="left:41px;top:659px;color:#222;transform:scaleX(0.88);transform-origin:0 0">SS24-IMP FAB</div>
<div style="position:absolute;left:220px;top:348px;width:2px;height:420px;background:#a9d3fb"></div>
<div style="position:absolute;left:226px;top:341px;width:1px;height:427px;background:#222"></div>
<div style="position:absolute;left:226px;top:340px;width:709px;height:1px;background:#aaa"></div>
<div style="position:absolute;left:226px;top:341px;width:709px;height:1px;background:#222"></div>
<div style="position:absolute;left:231px;top:346px;width:699px;height:2px;background:#118dff"></div>
<div style="position:absolute;left:231px;top:385px;width:699px;height:2px;background:#118dff"></div>
<div class="th" style="left:236px;top:354px">Name</div>
<div class="th" style="left:407px;top:354px"></div>
<div class="th" style="left:487px;top:354px">3-S</div>
<div class="th" style="left:541px;top:354px">4-M</div>
<div class="th" style="left:595px;top:354px">5-L</div>
<div class="th" style="left:649px;top:354px">61-4XL</div>
<div class="th" style="left:710px;top:354px">6-XL</div>
<div class="th" style="left:764px;top:354px">7-2XL</div>
<div class="th" style="left:818px;top:354px">8-3XL</div>
<div class="th" style="left:870px;top:354px">Total</div>
<div style="position:absolute;left:231px;top:388px;width:699px;height:28px;background:#fff"></div>
<div class="td nm" style="left:236px;top:396px;color:#666">C).CFM PO ENABLED</div>
<div class="td tn" style="right:835px;top:396px;color:#666">18,941</div>
<div class="td tn" style="right:781px;top:396px;color:#666">31,475</div>
<div class="td tn" style="right:727px;top:396px;color:#666">41,895</div>
<div class="td tn" style="right:666px;top:396px;color:#666">2,410</div>
<div class="td tn" style="right:612px;top:396px;color:#666">37,271</div>
<div class="td tn" style="right:558px;top:396px;color:#666">19,090</div>
<div class="td tn" style="right:506px;top:396px;color:#666">5,585</div>
<div class="td tb" style="right:440px;top:396px;color:#444">156,667</div>
<div style="position:absolute;left:231px;top:416px;width:699px;height:28px;background:#f2f2f2"></div>
<div class="td nm" style="left:236px;top:424px;color:#666">D).CANCEL</div>
<div class="td tn" style="right:835px;top:424px;color:#666">336</div>
<div class="td tn" style="right:781px;top:424px;color:#666">1,010</div>
<div class="td tn" style="right:727px;top:424px;color:#666">1,294</div>
<div class="td tn" style="right:666px;top:424px;color:#666">55</div>
<div class="td tn" style="right:612px;top:424px;color:#666">1,102</div>
<div class="td tn" style="right:558px;top:424px;color:#666">633</div>
<div class="td tn" style="right:506px;top:424px;color:#666">275</div>
<div class="td tb" style="right:440px;top:424px;color:#444">4,705</div>
<div style="position:absolute;left:231px;top:444px;width:699px;height:28px;background:#fff"></div>
<div class="td nm" style="left:236px;top:452px;color:#666">E).TARGET PRODUCTION</div>
<div class="td tn" style="right:835px;top:452px;color:#666">20,121</div>
<div class="td tn" style="right:781px;top:452px;color:#666">38,073</div>
<div class="td tn" style="right:727px;top:452px;color:#666">51,126</div>
<div class="td tn" style="right:666px;top:452px;color:#666">2,958</div>
<div class="td tn" style="right:612px;top:452px;color:#666">40,481</div>
<div class="td tn" style="right:558px;top:452px;color:#666">21,596</div>
<div class="td tn" style="right:506px;top:452px;color:#666">6,946</div>
<div class="td tb" style="right:440px;top:452px;color:#444">181,301</div>
<div style="position:absolute;left:231px;top:472px;width:699px;height:28px;background:#f2f2f2"></div>
<div class="td nm" style="left:236px;top:480px;color:#666">F).WORK ORD REL</div>
<div class="td tn" style="right:835px;top:480px;color:#666">20,097</div>
<div class="td tn" style="right:781px;top:480px;color:#666">37,990</div>
<div class="td tn" style="right:727px;top:480px;color:#666">51,021</div>
<div class="td tn" style="right:666px;top:480px;color:#666">2,951</div>
<div class="td tn" style="right:612px;top:480px;color:#666">40,429</div>
<div class="td tn" style="right:558px;top:480px;color:#666">21,555</div>
<div class="td tn" style="right:506px;top:480px;color:#666">6,928</div>
<div class="td tb" style="right:440px;top:480px;color:#444">180,971</div>
<div style="position:absolute;left:231px;top:500px;width:699px;height:28px;background:#fff"></div>
<div class="td nm" style="left:236px;top:508px;color:#666">G).ORDER UPTO</div>
<div class="td tn" style="right:835px;top:508px;color:#666">18,941</div>
<div class="td tn" style="right:781px;top:508px;color:#666">31,475</div>
<div class="td tn" style="right:727px;top:508px;color:#666">41,895</div>
<div class="td tn" style="right:666px;top:508px;color:#666">2,410</div>
<div class="td tn" style="right:612px;top:508px;color:#666">37,271</div>
<div class="td tn" style="right:558px;top:508px;color:#666">19,090</div>
<div class="td tn" style="right:506px;top:508px;color:#666">5,585</div>
<div class="td tb" style="right:440px;top:508px;color:#444">156,667</div>
<div style="position:absolute;left:231px;top:528px;width:699px;height:28px;background:#f2f2f2"></div>
<div class="td nm" style="left:236px;top:536px;color:#666">H).WORK PEND</div>
<div class="td tn" style="right:835px;top:536px;color:#666">20,097</div>
<div class="td tn" style="right:781px;top:536px;color:#666">37,990</div>
<div class="td tn" style="right:727px;top:536px;color:#666">51,021</div>
<div class="td tn" style="right:666px;top:536px;color:#666">2,951</div>
<div class="td tn" style="right:612px;top:536px;color:#666">40,429</div>
<div class="td tn" style="right:558px;top:536px;color:#666">21,555</div>
<div class="td tn" style="right:506px;top:536px;color:#666">6,928</div>
<div class="td tb" style="right:440px;top:536px;color:#444">180,971</div>
<div style="position:absolute;left:231px;top:556px;width:699px;height:28px;background:#fff"></div>
<div class="td nm" style="left:236px;top:564px;color:#666">I).CUT ORD REL</div>
<div class="td tn" style="right:835px;top:564px;color:#666">17,655</div>
<div class="td tn" style="right:781px;top:564px;color:#666">29,729</div>
<div class="td tn" style="right:727px;top:564px;color:#666">40,425</div>
<div class="td tn" style="right:666px;top:564px;color:#666">2,299</div>
<div class="td tn" style="right:612px;top:564px;color:#666">35,186</div>
<div class="td tn" style="right:558px;top:564px;color:#666">17,373</div>
<div class="td tn" style="right:506px;top:564px;color:#666">5,320</div>
<div class="td tb" style="right:440px;top:564px;color:#444">147,987</div>
<div style="position:absolute;left:231px;top:584px;width:699px;height:28px;background:#f2f2f2"></div>
<div class="td nm" style="left:236px;top:592px;color:#666">J).CUT PEND</div>
<div class="td tn" style="right:835px;top:592px;color:#666">17,655</div>
<div class="td tn" style="right:781px;top:592px;color:#666">29,729</div>
<div class="td tn" style="right:727px;top:592px;color:#666">40,425</div>
<div class="td tn" style="right:666px;top:592px;color:#666">2,299</div>
<div class="td tn" style="right:612px;top:592px;color:#666">35,186</div>
<div class="td tn" style="right:558px;top:592px;color:#666">17,373</div>
<div class="td tn" style="right:506px;top:592px;color:#666">5,320</div>
<div class="td tb" style="right:440px;top:592px;color:#444">147,987</div>
<div style="position:absolute;left:231px;top:612px;width:699px;height:28px;background:#fff"></div>
<div class="td nm" style="left:236px;top:620px;color:#666">K).LINE ISS</div>
<div class="td tn" style="right:835px;top:620px;color:#666">16,274</div>
<div class="td tn" style="right:781px;top:620px;color:#666">27,122</div>
<div class="td tn" style="right:727px;top:620px;color:#666">36,057</div>
<div class="td tn" style="right:666px;top:620px;color:#666">2,264</div>
<div class="td tn" style="right:612px;top:620px;color:#666">31,953</div>
<div class="td tn" style="right:558px;top:620px;color:#666">15,448</div>
<div class="td tn" style="right:506px;top:620px;color:#666">5,039</div>
<div class="td tb" style="right:440px;top:620px;color:#444">134,157</div>
<div style="position:absolute;left:231px;top:640px;width:699px;height:28px;background:#f2f2f2"></div>
<div class="td nm" style="left:236px;top:648px;color:#666">L).PRODUCTION</div>
<div class="td tn" style="right:835px;top:648px;color:#666">15,962</div>
<div class="td tn" style="right:781px;top:648px;color:#666">26,754</div>
<div class="td tn" style="right:727px;top:648px;color:#666">35,510</div>
<div class="td tn" style="right:666px;top:648px;color:#666">2,186</div>
<div class="td tn" style="right:612px;top:648px;color:#666">31,557</div>
<div class="td tn" style="right:558px;top:648px;color:#666">15,239</div>
<div class="td tn" style="right:506px;top:648px;color:#666">5,004</div>
<div class="td tb" style="right:440px;top:648px;color:#444">132,212</div>
<div style="position:absolute;left:231px;top:668px;width:699px;height:28px;background:#fff"></div>
<div class="td nm" style="left:236px;top:676px;color:#666">M).REJECTION</div>
<div class="td tn" style="right:835px;top:676px;color:#666">112</div>
<div class="td tn" style="right:781px;top:676px;color:#666">130</div>
<div class="td tn" style="right:727px;top:676px;color:#666">135</div>
<div class="td tn" style="right:666px;top:676px;color:#666">11</div>
<div class="td tn" style="right:612px;top:676px;color:#666">136</div>
<div class="td tn" style="right:558px;top:676px;color:#666">101</div>
<div class="td tn" style="right:506px;top:676px;color:#666">15</div>
<div class="td tb" style="right:440px;top:676px;color:#444">640</div>
<div style="position:absolute;left:231px;top:696px;width:699px;height:28px;background:#f2f2f2"></div>
<div class="td nm" style="left:236px;top:704px;color:#666">N).WIP</div>
<div class="td tn" style="right:835px;top:704px;color:#666">200</div>
<div class="td tn" style="right:781px;top:704px;color:#666">238</div>
<div class="td tn" style="right:727px;top:704px;color:#666">412</div>
<div class="td tn" style="right:666px;top:704px;color:#666">67</div>
<div class="td tn" style="right:612px;top:704px;color:#666">260</div>
<div class="td tn" style="right:558px;top:704px;color:#666">108</div>
<div class="td tn" style="right:506px;top:704px;color:#666">20</div>
<div class="td tb" style="right:440px;top:704px;color:#444">1,305</div>
<div style="position:absolute;left:231px;top:724px;width:699px;height:28px;background:#e6e6e6"></div>
<div class="td nm" style="left:236px;top:732px;color:#222">O).SHIP</div>
<div class="td tn" style="right:835px;top:732px;color:#222">15,768</div>
<div class="td tn" style="right:781px;top:732px;color:#222">26,172</div>
<div class="td tn" style="right:727px;top:732px;color:#222">34,710</div>
<div class="td tn" style="right:666px;top:732px;color:#222">2,160</div>
<div class="td tn" style="right:612px;top:732px;color:#222">30,540</div>
<div class="td tn" style="right:558px;top:732px;color:#222">14,520</div>
<div class="td tn" style="right:506px;top:732px;color:#222">4,710</div>
<div class="td tb" style="right:440px;top:732px;color:#111">128,580</div>
<div style="position:absolute;left:233px;top:725px;width:2px;height:26px;background:#222"></div>
<div style="position:absolute;left:231px;top:752px;width:699px;height:28px;background:#f2f2f2"></div>
<div class="td nm" style="left:236px;top:760px;color:#666">Z.)BALANCE</div>
<div class="td tn" style="right:835px;top:760px;color:#666">194</div>
<div class="td tn" style="right:781px;top:760px;color:#666">582</div>
<div class="td tn" style="right:727px;top:760px;color:#666">800</div>
<div class="td tn" style="right:666px;top:760px;color:#666">26</div>
<div class="td tn" style="right:612px;top:760px;color:#666">1,017</div>
<div class="td tn" style="right:558px;top:760px;color:#666">719</div>
<div class="td tn" style="right:506px;top:760px;color:#666">294</div>
<div class="td tb" style="right:440px;top:760px;color:#444">3,632</div>
<div style="position:absolute;left:481px;top:348px;width:2px;height:37px;background:#e6e6e6"></div>
<div style="position:absolute;left:481px;top:387px;width:2px;height:381px;background:rgba(0,0,0,0.06)"></div>
<div style="position:absolute;left:535px;top:348px;width:2px;height:37px;background:#e6e6e6"></div>
<div style="position:absolute;left:535px;top:387px;width:2px;height:381px;background:rgba(0,0,0,0.06)"></div>
<div style="position:absolute;left:589px;top:348px;width:2px;height:37px;background:#e6e6e6"></div>
<div style="position:absolute;left:589px;top:387px;width:2px;height:381px;background:rgba(0,0,0,0.06)"></div>
<div style="position:absolute;left:643px;top:348px;width:2px;height:37px;background:#e6e6e6"></div>
<div style="position:absolute;left:643px;top:387px;width:2px;height:381px;background:rgba(0,0,0,0.06)"></div>
<div style="position:absolute;left:704px;top:348px;width:2px;height:37px;background:#e6e6e6"></div>
<div style="position:absolute;left:704px;top:387px;width:2px;height:381px;background:rgba(0,0,0,0.06)"></div>
<div style="position:absolute;left:758px;top:348px;width:2px;height:37px;background:#e6e6e6"></div>
<div style="position:absolute;left:758px;top:387px;width:2px;height:381px;background:rgba(0,0,0,0.06)"></div>
<div style="position:absolute;left:812px;top:348px;width:2px;height:37px;background:#e6e6e6"></div>
<div style="position:absolute;left:812px;top:387px;width:2px;height:381px;background:rgba(0,0,0,0.06)"></div>
<div style="position:absolute;left:864px;top:348px;width:2px;height:37px;background:#e6e6e6"></div>
<div style="position:absolute;left:864px;top:387px;width:2px;height:381px;background:rgba(0,0,0,0.06)"></div>
<div style="position:absolute;left:400px;top:348px;width:2px;height:37px;background:#e6e6e6"></div>
<div style="position:absolute;left:401px;top:387px;width:1px;height:381px;background:#118dff"></div>
<div class="ob" style="left:478px;top:722px;width:457px;height:38px"></div>
</body></html>
